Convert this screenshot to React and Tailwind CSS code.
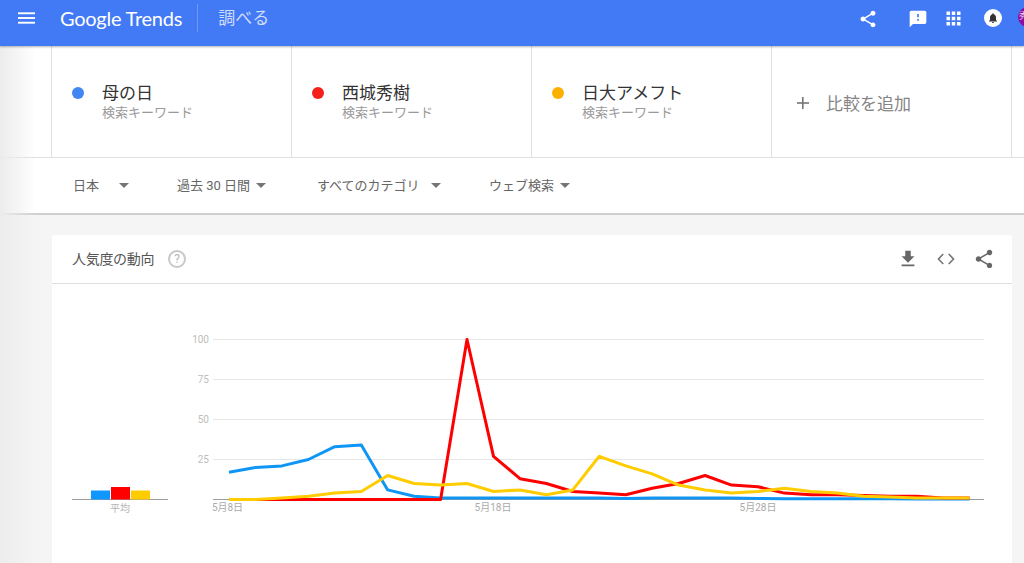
const FONT = { fontFamily: 'Roboto, "Noto Sans CJK JP", sans-serif' };

const X = (i) => 229 + i * 26.45;
const Y = (v) => 499.5 - v * 1.6;
const pts = (d) => d.map((v, i) => `${X(i).toFixed(1)},${Y(v).toFixed(1)}`).join(' ');

const blue = [17, 20, 21, 25, 33, 34, 6, 2, 1, 1, 1, 1, 1, 1, 1, 0.6, 1, 1, 1, 1, 0.6, 0.5, 0.5, 0.5, 0.5, 0.5, 0.3, 0.3, 0.3];
const red = [0, 0, 0, 0, 0, 0, 0, 0, 0, 100, 27, 13, 10, 5, 4, 3, 7, 10, 15, 9, 8, 4, 3, 3, 2.5, 2, 2, 1, 1];
const yellow = [0, 0, 1, 2, 4, 5, 15, 10, 9, 10, 5, 6, 3, 6, 27, 21, 16, 9, 6, 4, 5, 7, 5, 4, 2, 1.5, 1, 1, 1];

const SHARE = 'M18 16.08c-.76 0-1.44.3-1.96.77L8.91 12.7c.05-.23.09-.46.09-.7s-.04-.47-.09-.7l7.05-4.11c.54.5 1.25.81 2.04.81 1.66 0 3-1.34 3-3s-1.34-3-3-3-3 1.34-3 3c0 .24.04.47.09.7L8.04 9.81C7.5 9.31 6.79 9 6 9c-1.66 0-3 1.34-3 3s1.34 3 3 3c.79 0 1.5-.31 2.04-.81l7.12 4.16c-.05.21-.08.43-.08.65 0 1.61 1.31 2.92 2.92 2.92s2.92-1.31 2.92-2.92-1.31-2.92-2.92-2.92z';

function Term({ color, title }) {
  return (
    <div className="w-[240px] h-full border-r border-[#e0e0e0] flex flex-col justify-center pl-5">
      <div className="flex items-center">
        <span className="w-3 h-3 rounded-full shrink-0" style={{ background: color }} />
        <span className="ml-[18px] text-[17px] leading-[22px] text-[#333]">{title}</span>
      </div>
      <div className="ml-[30px] text-[13px] leading-[18px] text-[#9a9a9a]">検索キーワード</div>
    </div>
  );
}

function Filter({ label, w, gap }) {
  return (
    <div className="flex items-center shrink-0" style={{ width: w }}>
      <span className="text-[13px] text-[#666] whitespace-nowrap">{label}</span>
      <span
        className="ml-auto w-0 h-0 border-l-[5px] border-r-[5px] border-t-[5px] border-l-transparent border-r-transparent border-t-[#757575]"
        style={{ marginRight: gap }}
      />
    </div>
  );
}

export default function App() {
  return (
    <div className="relative w-[1024px] h-[563px] overflow-hidden bg-[#f5f5f5]" style={FONT}>
      <header className="relative z-10 h-[46px] bg-[#4279f4] shadow-[0_1px_2px_rgba(0,0,0,0.3)] flex items-center text-white">
        <svg className="ml-[18px] -mt-[10px]" width="17" height="12" viewBox="0 0 18 12" fill="white">
          <rect y="0" width="18" height="2" />
          <rect y="5" width="18" height="2" />
          <rect y="10" width="18" height="2" />
        </svg>
        <span className="ml-[25px] -mt-[11px] text-[20px] leading-none tracking-[-0.25px]" style={{ fontFamily: 'Lato, sans-serif' }}>Google Trends</span>
        <span className="ml-[15px] -mt-[10px] w-px h-[28px] bg-white/25" />
        <span className="ml-[20px] -mt-[9px] text-[17px] leading-none text-white/75">調べる</span>
        <div className="ml-auto flex items-center -mt-[6px] relative w-[164px] h-[24px]">
          <svg className="absolute top-[1px]" width="20" height="20" viewBox="0 0 24 24" fill="white" style={{ left: -2 }}>
            <path d={SHARE} />
          </svg>
          <svg className="absolute top-[1px]" width="20" height="20" viewBox="0 0 24 24" fill="white" style={{ left: 48 }}>
            <path d="M20 2H4c-1.1 0-2 .9-2 2v18l4-4h14c1.1 0 2-.9 2-2V4c0-1.100-.9-2-2-2zm-7 12h-2v-2h2v2zm0-4h-2V6h2v4z" />
          </svg>
          <svg className="absolute top-[0px]" width="21" height="21" viewBox="0 0 24 24" fill="white" style={{ left: 83 }}>
            <path d="M4 8h4V4H4v4zm6 12h4v-4h-4v4zm-6 0h4v-4H4v4zm0-6h4v-4H4v4zm6 0h4v-4h-4v4zm6-10v4h4V4h-4zm-6 4h4V4h-4v4zm6 6h4v-4h-4v4zm0 6h4v-4h-4v4z" />
          </svg>
          <div className="absolute top-[1px] w-[18px] h-[18px] rounded-full bg-white flex items-center justify-center" style={{ left: 124 }}>
            <svg width="12" height="12" viewBox="0 0 24 24" fill="#333">
              <path d="M12 22c1.100 0 2-.9 2-2h-4c0 1.100.9 2 2 2zm6-6v-5c0-3.070-1.630-5.640-4.500-6.320V4c0-.83-.67-1.500-1.500-1.500s-1.500.67-1.500 1.500v.68C7.640 5.360 6 7.920 6 11v5l-2 2v1h16v-1l-2-2z" />
            </svg>
          </div>
          <div className="absolute top-[-1px] w-[20px] h-[20px] rounded-full bg-[#8e0ca3] flex items-center text-[9px] pl-[1px] text-white/80 overflow-hidden" style={{ left: 158 }}>
            秀
          </div>
        </div>
      </header>

      <section className="h-[112px] bg-white border-b border-[#e0e0e0] pl-[51px] flex">
        <div className="flex h-full border-l border-[#e0e0e0]">
          <Term color="#4285f4" title="母の日" />
          <Term color="#f4201a" title="西城秀樹" />
          <Term color="#fbb000" title="日大アメフト" />
          <div className="w-[240px] h-full border-r border-[#e0e0e0] flex items-center pl-6">
            <svg className="mt-[3px]" width="14" height="14" viewBox="0 0 14 14" fill="#757575">
              <rect x="6" y="1" width="1.600" height="12" />
              <rect x="1" y="6.200" width="12" height="1.600" />
            </svg>
            <span className="ml-[16px] mt-[7px] text-[17px] text-[#858585]">比較を追加</span>
          </div>
        </div>
      </section>

      <section className="h-[57px] bg-white border-b-2 border-[#cfcfcf] pl-[73px] flex items-center">
        <Filter label="日本" w={104} gap={48} />
        <Filter label="過去 30 日間" w={140} gap={51} />
        <Filter label="すべてのカテゴリ" w={172} gap={48} />
        <Filter label="ウェブ検索" w={82} gap={1} />
      </section>

      <main className="ml-[52px] mt-[20px] w-[960px] h-[330px] bg-white rounded-t-[2px]">
        <div className="h-[49px] border-b border-[#e0e0e0] flex items-center pl-5 relative">
          <span className="text-[14px] tracking-[-0.3px] text-[#555]">人気度の動向</span>
          <span className="ml-[14px] w-[18px] h-[18px] rounded-full border-2 border-[#c8c8c8] text-[#b5b5b5] text-[12px] leading-none flex items-center justify-center">?</span>
          <div className="ml-auto flex items-center gap-[16px] pr-[17px]">
            <svg width="22" height="22" viewBox="0 0 24 24" fill="#666">
              <path d="M19 9h-4V3H9v6H5l7 7 7-7zM5 18v2h14v-2H5z" />
            </svg>
            <svg width="22" height="22" viewBox="0 0 24 24" fill="none" stroke="#777" strokeWidth="1.800">
              <path d="M9 6.500 3.800 12 9 17.500M15 6.500l5.200 5.500L15 17.500" />
            </svg>
            <svg width="22" height="22" viewBox="0 0 24 24" fill="#666">
              <path d={SHARE} />
            </svg>
          </div>
        </div>
        <svg width="960" height="280" viewBox="52 284 960 280" className="block">
          {[339.5, 379.5, 419.5, 459.5].map((y) => (
            <line key={y} x1="213" x2="984" y1={y} y2={y} stroke="#e6e6e6" strokeWidth="1" />
          ))}
          <line x1="213" x2="984" y1="499.5" y2="499.5" stroke="#9e9e9e" strokeWidth="1" />
          <line x1="72" x2="168" y1="499.5" y2="499.5" stroke="#9e9e9e" strokeWidth="1" />
          {[['100', 343], ['75', 383], ['50', 423], ['25', 463]].map(([t, y]) => (
            <text key={t} x="209" y={y} textAnchor="end" fontSize="10" fill="#bdbdbd">{t}</text>
          ))}
          <rect x="91" y="490.500" width="19" height="9" fill="#0f96ff" />
          <rect x="111" y="487" width="19" height="12.500" fill="#ff0000" />
          <rect x="131" y="490.500" width="19" height="9" fill="#ffcc00" />
          <text x="120" y="512" textAnchor="middle" fontSize="10" fill="#b5b5b5">平均</text>
          {[['5月8日', 227.5], ['5月18日', 493], ['5月28日', 758]].map(([t, x]) => (
            <text key={t} x={x} y="511" textAnchor="middle" fontSize="10" fill="#aaaaaa">{t}</text>
          ))}
          <polyline points={pts(blue)} fill="none" stroke="#0f96f5" strokeWidth="3" strokeLinejoin="round" />
          <polyline points={pts(red)} fill="none" stroke="#ff0000" strokeWidth="3" strokeLinejoin="round" />
          <polyline points={pts(yellow)} fill="none" stroke="#ffcc00" strokeWidth="3" strokeLinejoin="round" />
        </svg>
      </main>

      <div className="absolute left-0 top-[46px] bottom-0 w-[36px] pointer-events-none bg-gradient-to-r from-[#ececec] to-transparent" />
    </div>
  );
}
